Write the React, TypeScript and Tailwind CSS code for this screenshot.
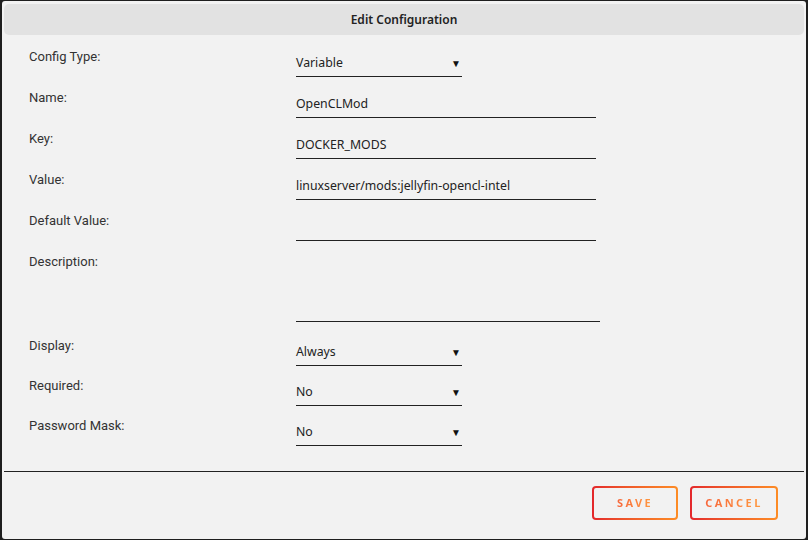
import React from "react";

const labelCls = "w-[267px] shrink-0 mt-[1px] h-[17px] leading-[17px] text-[13px] text-[#333]";
const font = { fontFamily: "Roboto, 'Noto Sans', sans-serif" };
const valFont = { fontFamily: "'Noto Sans', 'Open Sans', sans-serif" };

function Select({ value }: { value: string }) {
  return (
    <div
      className="mt-[5px] w-[166px] h-[25px] pb-[1px] border-b border-[#222] flex items-center justify-between text-[12.3px] text-[#222]"
      style={valFont}
    >
      <span>{value}</span>
      <span className="text-[10px] mr-[1px] text-[#111]">▼</span>
    </div>
  );
}

function TextInput({ value, w = 300 }: { value: string; w?: number }) {
  return (
    <div
      className="mt-[5px] h-[25px] pb-[1px] border-b border-[#222] flex items-center text-[12.3px] text-[#222]"
      style={{ ...valFont, width: w }}
    >
      {value}
    </div>
  );
}

function Row({ label, children, h = 41 }: { label: string; children: React.ReactNode; h?: number }) {
  return (
    <div className="flex items-start" style={{ height: h }}>
      <div className={labelCls}>{label}</div>
      {children}
    </div>
  );
}

function GradButton({ text }: { text: string }) {
  return (
    <div className="rounded-[4px] p-[2px] bg-gradient-to-r from-[#e3262b] to-[#fd8c25]">
      <div className="h-[30px] rounded-[2px] bg-[#f2f2f2] flex items-center justify-center">
        <span
          className="text-[11px] font-bold tracking-[2.4px] bg-gradient-to-r from-[#f7663a] to-[#ff9a40] bg-clip-text text-transparent"
          style={valFont}
        >
          {text}
        </span>
      </div>
    </div>
  );
}

export default function App() {
  return (
    <div className="w-[808px] h-[540px] bg-[#1e1e1e] pt-[1px] pb-[1px] px-[2px]" style={font}>
      <div className="w-full h-full bg-[#f2f2f2] rounded-[3px] flex flex-col">
        <div className="mx-[2px] mt-[3px] h-[31px] rounded-[5px] bg-[#e2e2e2] flex items-center justify-center">
          <span className="text-[12px] font-semibold text-[#222]" style={valFont}>
            Edit Configuration
          </span>
        </div>
        <div className="pl-[27px] pt-[12px] flex flex-col">
          <Row label="Config Type:">
            <Select value="Variable" />
          </Row>
          <Row label="Name:">
            <TextInput value="OpenCLMod" />
          </Row>
          <Row label="Key:">
            <TextInput value="DOCKER_MODS" />
          </Row>
          <Row label="Value:">
            <TextInput value="linuxserver/mods:jellyfin-opencl-intel" />
          </Row>
          <Row label="Default Value:">
            <TextInput value="" />
          </Row>
          <Row label="Description:" h={84}>
            <div className="mt-[5px] w-[304px] h-[65px] border-b border-[#222]" />
          </Row>
          <Row label="Display:" h={40}>
            <Select value="Always" />
          </Row>
          <Row label="Required:" h={40}>
            <Select value="No" />
          </Row>
          <Row label="Password Mask:" h={40}>
            <Select value="No" />
          </Row>
        </div>
        <div className="mx-[2px] mt-[15px] border-t border-[#222]" />
        <div className="flex justify-end gap-[12px] pr-[28px] pt-[14px]">
          <div className="w-[86px]">
            <GradButton text="SAVE" />
          </div>
          <div className="w-[88px]">
            <GradButton text="CANCEL" />
          </div>
        </div>
      </div>
    </div>
  );
}
